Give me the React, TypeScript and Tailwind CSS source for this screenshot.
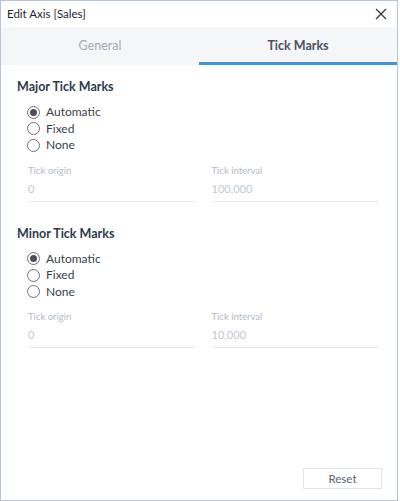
import React from "react";

function Radio({ checked, label }: { checked?: boolean; label: string }) {
  return (
    <div className="flex items-center gap-[6px] h-[16.5px]">
      <span className="w-[13px] h-[13px] rounded-full border border-[#6b7280] flex items-center justify-center bg-white">
        {checked && <span className="w-[7px] h-[7px] rounded-full bg-[#4a4f59]" />}
      </span>
      <span className="text-[12px] text-[#3a3f4a]">{label}</span>
    </div>
  );
}

function Field({ label, value }: { label: string; value: string }) {
  return (
    <div className="flex-1 flex flex-col">
      <span className="text-[9.5px] text-[#b3bac6] leading-[12px]">{label}</span>
      <span className="text-[11px] text-[#c3c9d3] leading-[14px] mt-[5px] pb-[5px] border-b border-[#e3e7ee]">{value}</span>
    </div>
  );
}

function Section({ title, interval }: { title: string; interval: string }) {
  return (
    <div className="flex flex-col">
      <div className="text-[12.5px] font-bold text-[#2f3a4d] leading-[16px]">{title}</div>
      <div className="flex flex-col pl-[10px] mt-[9px]">
        <Radio checked label="Automatic" />
        <Radio label="Fixed" />
        <Radio label="None" />
      </div>
      <div className="flex gap-[16px] pl-[11px] pr-[2px] mt-[11px]">
        <Field label="Tick origin" value="0" />
        <Field label="Tick interval" value={interval} />
      </div>
    </div>
  );
}

export default function App() {
  return (
    <div
      className="w-[398px] h-[501px] bg-white border border-[#b7c4d6] flex flex-col"
      style={{ fontFamily: "Lato, 'Open Sans', sans-serif" }}
    >
      <div className="h-[26px] flex items-center justify-between pl-[6px] pr-[8px]">
        <span className="text-[11.5px] text-[#1f2430]">Edit Axis [Sales]</span>
        <svg width="12" height="12" viewBox="0 0 12 12" className="mr-[2px]">
          <path d="M1 1 L11 11 M11 1 L1 11" stroke="#333" strokeWidth="1.2" />
        </svg>
      </div>
      <div className="h-[38px] bg-[#f5f6f8] flex">
        <div className="flex-1 flex items-center justify-center text-[12.5px] text-[#a3abb9]">General</div>
        <div className="flex-1 flex items-center justify-center text-[12.5px] text-[#4a5263] font-bold border-b-[3px] border-[#3d95e0] pt-[3px]">
          Tick Marks
        </div>
      </div>
      <div className="flex-1 flex flex-col px-[16px] pt-[14px] gap-[24px]">
        <Section title="Major Tick Marks" interval="100,000" />
        <Section title="Minor Tick Marks" interval="10,000" />
      </div>
      <div className="flex justify-end pr-[15px] pb-[11px]">
        <button className="w-[79px] h-[21px] border border-[#dfe3ea] text-[11.5px] text-[#5a6272] bg-white">
          Reset
        </button>
      </div>
    </div>
  );
}
